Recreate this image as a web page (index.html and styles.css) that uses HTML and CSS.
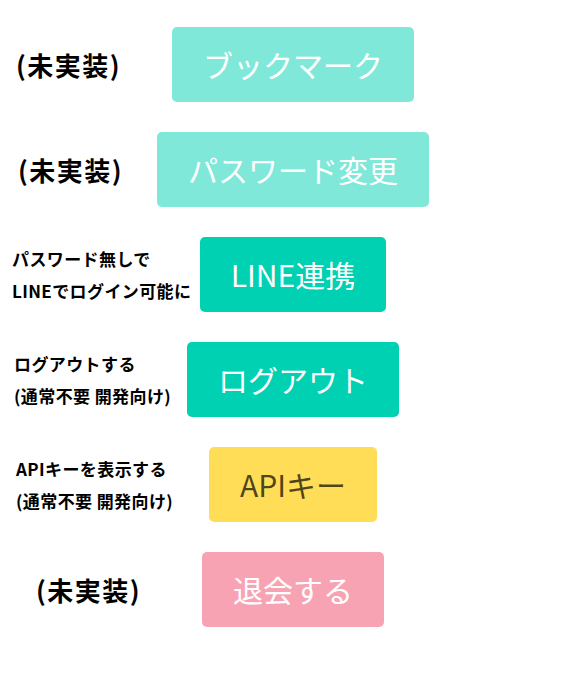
FILE: index.html
```html
<!DOCTYPE html>
<html lang="ja">
<head>
<meta charset="utf-8">
<title>設定</title>
<link rel="stylesheet" href="styles.css">
</head>
<body>
<main class="settings">
  <div class="row">
    <p class="label label-big label-r1">(未実装)</p>
    <button class="btn btn-primary-disabled">ブックマーク</button>
  </div>
  <div class="row">
    <p class="label label-big label-r2">(未実装)</p>
    <button class="btn btn-primary-disabled">パスワード変更</button>
  </div>
  <div class="row">
    <p class="label label-small label-r3">パスワード無しで<br>LINEでログイン可能に</p>
    <button class="btn btn-primary">LINE連携</button>
  </div>
  <div class="row">
    <p class="label label-small label-r4">ログアウトする<br>(通常不要 開発向け)</p>
    <button class="btn btn-primary">ログアウト</button>
  </div>
  <div class="row">
    <p class="label label-small label-r5">APIキーを表示する<br>(通常不要 開発向け)</p>
    <button class="btn btn-warning">APIキー</button>
  </div>
  <div class="row">
    <p class="label label-big label-r6">(未実装)</p>
    <button class="btn btn-danger-disabled">退会する</button>
  </div>
</main>
</body>
</html>
```

FILE: styles.css
```css
html, body {
  margin: 0;
  padding: 0;
  background: #ffffff;
}

body {
  font-family: "Noto Sans CJK JP", "Noto Sans", sans-serif;
  color: #000000;
}

.settings {
  display: flex;
  flex-direction: column;
  gap: 30px;
  padding: 27px 2px 0 0;
}

.row {
  display: grid;
  grid-template-columns: minmax(0, 1fr) auto minmax(0, 1fr);
  align-items: center;
  height: 75px;
}

.label {
  grid-column: 1;
  margin: 0;
  font-weight: 700;
  white-space: nowrap;
}

.label-big {
  font-size: 26px;
  line-height: 32px;
  letter-spacing: 1.5px;
}

.label-small {
  font-size: 17px;
  line-height: 32px;
  letter-spacing: 0.4px;
}

.label-r1 { padding-left: 16px; }
.label-r2 { padding-left: 18px; }
.label-r3 { padding-left: 12px; }
.label-r4 { padding-left: 14px; }
.label-r5 { padding-left: 16px; }
.label-r6 { padding-left: 36px; }

.btn {
  grid-column: 2;
  height: 75px;
  padding: 0 31px;
  border: none;
  border-radius: 5px;
  font-family: "Noto Sans CJK JP", "Noto Sans", sans-serif;
  font-size: 30px;
  font-weight: 400;
  line-height: 75px;
  color: #ffffff;
  white-space: nowrap;
  cursor: pointer;
}

.btn-primary-disabled {
  background: #80e8d9;
  cursor: not-allowed;
}

.btn-primary {
  background: #00d1b2;
}

.btn-warning {
  background: #ffdd57;
  color: rgba(0, 0, 0, 0.7);
}

.btn-danger-disabled {
  background: #f8a3b4;
  cursor: not-allowed;
}
```
